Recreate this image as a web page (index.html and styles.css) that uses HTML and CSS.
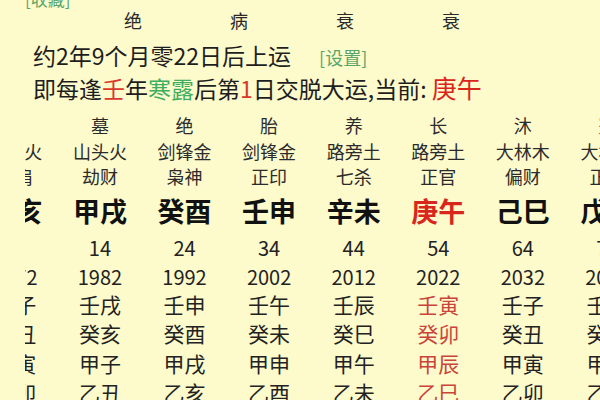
FILE: index.html
```html
<!DOCTYPE html>
<html lang="zh">
<head>
<meta charset="utf-8">
<title>大运</title>
<link rel="stylesheet" href="styles.css">
</head>
<body>
<div class="page">
  <div class="fav">[收藏]</div>
  <div class="pillars"><span>绝</span><span>病</span><span>衰</span><span>衰</span></div>
  <p class="line l1">约2年9个月零22日后上运<span class="set">[设置]</span></p>
  <p class="line l2">即每逢<span class="red">壬</span>年<span class="green">寒露</span>后第<span class="red">1</span>日交脱大运,当前: <span class="cur">庚午</span></p>
  <div class="scroller">
    <div class="dayun">
      <div class="c s"></div><div class="c s">墓</div><div class="c s">绝</div><div class="c s">胎</div><div class="c s">养</div><div class="c s">长</div><div class="c s">沐</div><div class="c s">冠</div>
      <div class="c s">山头火</div><div class="c s">山头火</div><div class="c s">剑锋金</div><div class="c s">剑锋金</div><div class="c s">路旁土</div><div class="c s">路旁土</div><div class="c s">大林木</div><div class="c s">大林木</div>
      <div class="c s">比肩</div><div class="c s">劫财</div><div class="c s">枭神</div><div class="c s">正印</div><div class="c s">七杀</div><div class="c s">正官</div><div class="c s">偏财</div><div class="c s">正财</div>
      <div class="c gz">乙亥</div><div class="c gz">甲戌</div><div class="c gz">癸酉</div><div class="c gz">壬申</div><div class="c gz">辛未</div><div class="c gz now">庚午</div><div class="c gz">己巳</div><div class="c gz">戊辰</div>
      <div class="c num"></div><div class="c num">14</div><div class="c num">24</div><div class="c num">34</div><div class="c num">44</div><div class="c num">54</div><div class="c num">64</div><div class="c num">74</div>
      <div class="c num">1972</div><div class="c num">1982</div><div class="c num">1992</div><div class="c num">2002</div><div class="c num">2012</div><div class="c num">2022</div><div class="c num">2032</div><div class="c num">2042</div>
      <div class="c ln">壬子</div><div class="c ln">壬戌</div><div class="c ln">壬申</div><div class="c ln">壬午</div><div class="c ln">壬辰</div><div class="c ln hl">壬寅</div><div class="c ln">壬子</div><div class="c ln">壬戌</div>
      <div class="c ln">癸丑</div><div class="c ln">癸亥</div><div class="c ln">癸酉</div><div class="c ln">癸未</div><div class="c ln">癸巳</div><div class="c ln hl">癸卯</div><div class="c ln">癸丑</div><div class="c ln">癸亥</div>
      <div class="c ln">甲寅</div><div class="c ln">甲子</div><div class="c ln">甲戌</div><div class="c ln">甲申</div><div class="c ln">甲午</div><div class="c ln hl">甲辰</div><div class="c ln">甲寅</div><div class="c ln">甲子</div>
      <div class="c ln">乙卯</div><div class="c ln">乙丑</div><div class="c ln">乙亥</div><div class="c ln">乙酉</div><div class="c ln">乙未</div><div class="c ln hl">乙巳</div><div class="c ln">乙卯</div><div class="c ln">乙丑</div>
    </div>
  </div>
</div>
</body>
</html>
```

FILE: styles.css
```css
html, body {
  margin: 0;
  padding: 0;
}
body {
  background: #fdfacc;
  width: 600px;
  height: 400px;
  overflow: hidden;
  font-family: "Noto Sans CJK SC", "Noto Sans", sans-serif;
  color: #1e1e1e;
}
.page {
  width: 600px;
  height: 400px;
  overflow: hidden;
}
.fav {
  margin: -11px 0 0 25px;
  height: 20px;
  line-height: 20px;
  font-size: 17px;
  color: #5aa56a;
}
.pillars {
  display: grid;
  grid-template-columns: repeat(4, 106px);
  margin-left: 80px;
  height: 22px;
  line-height: 22px;
  font-size: 18px;
  color: #2a2a2a;
}
.pillars span {
  text-align: center;
}
.line {
  margin: 0;
  padding-left: 33px;
  font-size: 23px;
  white-space: nowrap;
}
.l1 {
  margin-top: 9px;
  height: 30px;
  line-height: 30px;
}
.l2 {
  margin-top: 1px;
  height: 32px;
  line-height: 32px;
}
.set {
  margin-left: 28px;
  font-size: 18px;
  color: #5aa56a;
}
.red {
  color: #d8392c;
}
.green {
  color: #3fae5f;
}
.cur {
  font-size: 25px;
  color: #d8261c;
}
.scroller {
  margin: 9px 0 0 25px;
  width: 575px;
  overflow: hidden;
}
.dayun {
  display: grid;
  grid-template-columns: repeat(8, 84.6px);
  grid-template-rows: 26px 26px 24px 44px 31px 26.4px repeat(4, 29.3px);
  margin-left: -52px;
  width: max-content;
}
.c {
  display: flex;
  align-items: center;
  justify-content: center;
  white-space: nowrap;
}
.s {
  font-size: 18px;
  color: #2b2b2b;
}
.gz {
  font-size: 27px;
  font-weight: 700;
  color: #111;
}
.now {
  color: #d8261c;
}
.num {
  font-size: 20px;
  color: #222;
}
.ln {
  font-size: 21px;
  color: #222;
}
.hl {
  color: #c9443a;
}
```
